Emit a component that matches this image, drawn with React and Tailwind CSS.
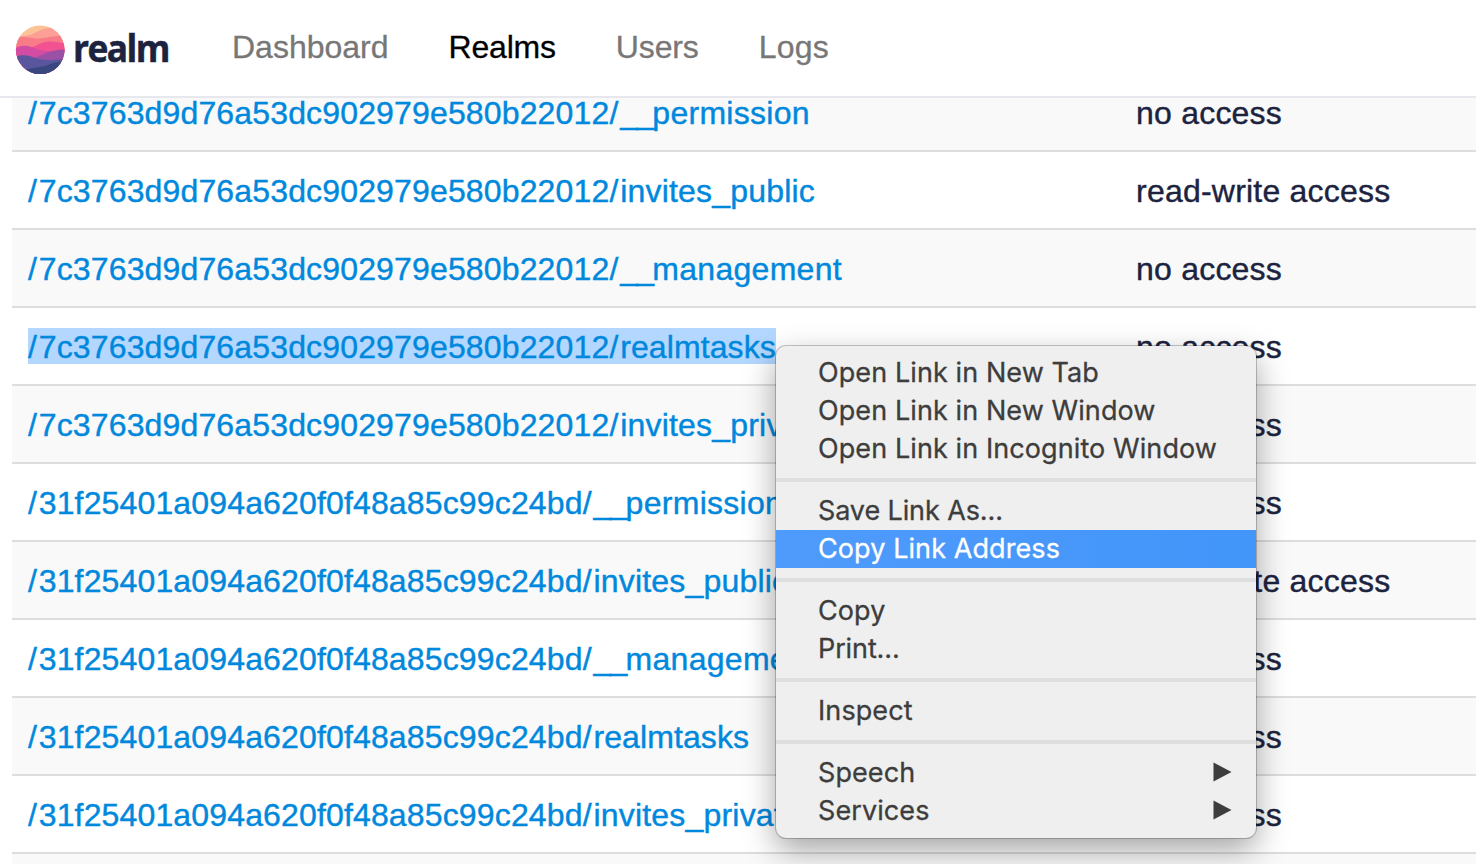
const A = '7c3763d9d76a53dc902979e580b22012';
const B = '31f25401a094a620f0f48a85c99c24bd';

const rows = [
  { dir: A, name: '__permission', access: 'no access' },
  { dir: A, name: 'invites_public', access: 'read-write access' },
  { dir: A, name: '__management', access: 'no access' },
  { dir: A, name: 'realmtasks', access: 'no access', selected: true },
  { dir: A, name: 'invites_private', access: 'no access' },
  { dir: B, name: '__permission', access: 'no access' },
  { dir: B, name: 'invites_public', access: 'read-write access' },
  { dir: B, name: '__management', access: 'no access' },
  { dir: B, name: 'realmtasks', access: 'no access' },
  { dir: B, name: 'invites_private', access: 'no access' },
  { dir: '', name: '', access: '' },
];

const menu = [
  [{ label: 'Open Link in New Tab' }, { label: 'Open Link in New Window' }, { label: 'Open Link in Incognito Window' }],
  [{ label: 'Save Link As...' }, { label: 'Copy Link Address', active: true }],
  [{ label: 'Copy' }, { label: 'Print...' }],
  [{ label: 'Inspect' }],
  [{ label: 'Speech', sub: true }, { label: 'Services', sub: true }],
];

function Logo() {
  return (
    <svg className="block shrink-0" width="160" height="56" viewBox="12 22 160 56">
      <defs>
        <clipPath id="disc"><circle cx="40.2" cy="49.800" r="24.3" /></clipPath>
      </defs>
      <g clipPath="url(#disc)">
        <rect x="14" y="24" width="54" height="54" fill="#fcc397" />
        <path d="M14 37.500C20 35 25 36.500 31 34.500C38 32 43 27 56 28L68 30V78H14Z" fill="#fc9f95" />
        <path d="M14 39C22 35.500 28 37.500 36 38.500C46 39 54 35 68 36V78H14Z" fill="#f77c88" />
        <path d="M14 50C24 49 32 48 38 44.500C46 40 54 41 68 44V78H14Z" fill="#f25192" />
        <path d="M14 49C20 45 26 45 33 47.500C42 51.500 50 53 68 49V78H14Z" fill="#d34ca3" />
        <path d="M34 58C44 55 50 49 68 49.500V78H34Z" fill="#9a50a5" />
        <path d="M14 57C22 54.500 28 55 34 57.500C44 61 54 61 68 58V78H14Z" fill="#59569e" />
        <path d="M26 69.500C36 67 42 67.500 48 65C54 62 58 61.500 68 61V78H26Z" fill="#39477f" />
      </g>
      <text transform="translate(73 62) scale(0.93 1)" fill="#1c233f" stroke="#1c233f" strokeWidth="0.500" fontFamily="'Open Sans', sans-serif" fontWeight="700" fontSize="38" letterSpacing="-1.700">realm</text>
    </svg>
  );
}

function NavItem({ children, className }) {
  return <a className={'block leading-[50px] whitespace-nowrap [-webkit-text-stroke:0.3px] ' + className}>{children}</a>;
}

function RealmPath({ dir, name }) {
  const internal = name.startsWith('__');
  return (
    <>
      <span className="tracking-[1.8px]">/</span>
      <span className="tracking-[0.15px]">{dir}</span>
      <span className="tracking-[1.8px]">/</span>
      {internal && <span className="tracking-[-1.7px]">__</span>}
      <span className={internal ? 'tracking-[0.28px]' : name === 'realmtasks' ? 'tracking-[0.1px]' : 'tracking-[0.2px]'}>
        {internal ? name.slice(2) : name}
      </span>
    </>
  );
}

function Row({ row, odd }) {
  return (
    <div className={'flex h-[78px] shrink-0 items-center border-t-2 border-[#dddddd] pl-4 [-webkit-text-stroke:0.4px] ' + (odd ? 'bg-white' : 'bg-[#f9f9f9]')}>
      <div className="w-[1108px] shrink-0 text-[#0088dd]">
        <span className={'block h-9 w-fit leading-[38px] whitespace-nowrap ' + (row.selected ? 'bg-[#b3d7ff]' : '')}>
          {row.dir && <RealmPath dir={row.dir} name={row.name} />}
        </span>
      </div>
      <div className="h-9 leading-[38px] tracking-[0.22px] whitespace-nowrap text-[#1c233f]">{row.access}</div>
    </div>
  );
}

function ContextMenu() {
  return (
    <div className="absolute top-[346px] left-[776px] w-[480px] rounded-[10px] bg-[#efefef] py-2 font-['Inter',sans-serif] text-[27px] tracking-[0.09px] text-[#3d3d3d] shadow-[0_0_0_1px_rgba(0,0,0,0.22),0_12px_32px_rgba(0,0,0,0.36)] [-webkit-text-stroke:0.3px]">
      {menu.map((group, g) => (
        <div key={g}>
          {g > 0 && <div className="my-[10px] h-1 bg-[#dedede]" />}
          {group.map((item) => (
            <div
              key={item.label}
              className={'flex h-[38px] items-center justify-between pr-6 pl-[42px] ' + (item.active ? 'bg-linear-to-r from-[#4f9bfc] to-[#4295f9] text-white' : '')}
            >
              <span className={'whitespace-nowrap ' + (item.label.endsWith('...') ? 'tracking-[-0.11px]' : '')}>{item.label}</span>
              {item.sub && (
                <svg className="-mt-0.5" width="19" height="20" viewBox="0 0 19 20"><path d="M0.500 0.500L18.500 10L0.500 19.500Z" fill="#3d3d3d" /></svg>
              )}
            </div>
          ))}
        </div>
      ))}
    </div>
  );
}

export default function App() {
  return (
    <div className="relative flex h-[864px] w-[1476px] flex-col overflow-hidden bg-white font-['Liberation_Sans',Arial,sans-serif] text-[32px]">
      <header className="flex h-[98px] shrink-0 items-start border-b-2 border-[#e7e7ee] bg-white pt-[22px] pl-3">
        <Logo />
        <nav className="flex gap-[60px] pl-[60px] text-[#777777]">
          <NavItem className="">Dashboard</NavItem>
          <NavItem className="tracking-[-0.2px] text-black">Realms</NavItem>
          <NavItem className="tracking-[-0.15px]">Users</NavItem>
          <NavItem className="tracking-[0.2px]">Logs</NavItem>
        </nav>
      </header>
      <main className="flex min-h-0 flex-1 flex-col overflow-hidden pl-3">
        <div className="-mt-[26px] flex flex-col">
          {rows.map((row, i) => <Row key={i} row={row} odd={i % 2 === 1} />)}
        </div>
      </main>
      <ContextMenu />
    </div>
  );
}
